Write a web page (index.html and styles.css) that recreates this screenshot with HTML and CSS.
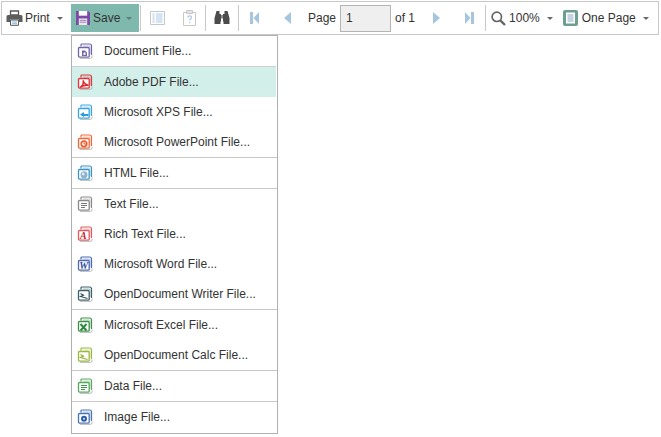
FILE: index.html
```html
<!DOCTYPE html>
<html lang="en">
<head>
<meta charset="utf-8">
<title>Report viewer</title>
<link rel="stylesheet" href="styles.css">
</head>
<body>
<svg class="defs" width="0" height="0" aria-hidden="true">
  <defs>
    <symbol id="sheets" viewBox="0 0 16 16">
      <path d="M4 3.500V2a1 1 0 0 1 1-1h7.500a2 2 0 0 1 2 2v9" fill="none" stroke="currentColor" stroke-width="1.200"/>
      <path d="M6 3h6a1 1 0 0 1 1 1v7" fill="none" stroke="currentColor" stroke-width=".8" opacity=".55"/>
      <path d="M2.500 4.500h8.500a1.200 1.200 0 0 1 1.200 1.200v7.600a.8.8 0 0 1-.8.8H2.500a1 1 0 0 1-1-1V5.500a1 1 0 0 1 1-1z" fill="#fff" stroke="currentColor" stroke-width="1.300"/>
      <path d="M15 12.500v1.200a1.600 1.600 0 0 1-1.600 1.600H3" fill="none" stroke="#b4b4b4" stroke-width="1"/>
    </symbol>
  </defs>
</svg>
<div class="toolbar">
  <div class="tool tool-print">
    <svg class="icon" width="17" height="16" viewBox="0 0 17 16"><path d="M4.500 1h8v4h-8z" fill="#fff" stroke="#555" stroke-width="1.300"/><path d="M2 5h13a1.500 1.500 0 0 1 1.500 1.500V12H13V9.500H4V12H.5V6.500A1.500 1.500 0 0 1 2 5z" fill="#5c5c5c"/><path d="M4.500 10h8v5.300h-8z" fill="#fff" stroke="#555"/><path d="M6 12h5M6 13.700h5" stroke="#8ab4d8"/></svg>
    <span class="label">Print</span><i class="caret"></i>
  </div>
  <div class="tool tool-save">
    <svg class="icon" width="14" height="14" viewBox="0 0 15 15"><path d="M0 0h13l2 2v13H0z" fill="#7b4aa6"/><path d="M3 0h9v5H3z" fill="#fff"/><path d="M3 8h9v7H3z" fill="#e8e8e8"/><path d="M4 10h7M4 12h7" stroke="#7b4aa6" stroke-width=".7"/></svg>
    <span class="label label-save">Save</span><i class="caret caret-save"></i>
  </div>
  <i class="sep sep-a"></i>
  <svg class="icon icon-doc" width="15" height="14" viewBox="0 0 15 14"><path d="M.5.500h14v13H.5z" fill="#fff" stroke="#c4c8cc"/><path d="M2.500 3h2M2.500 5h2M2.500 7h2M2.500 9h2M2.500 11h2" stroke="#a8c4e4"/><path d="M6 3h6.500M6 5h6.500M6 7h6.500M6 9h6.500M6 11h6.500" stroke="#a9c7ea"/></svg>
  <svg class="icon icon-clip" width="13" height="16" viewBox="0 0 13 16"><path d="M.5 2.500h12v13H.5z" fill="#fff" stroke="#c8c8c8"/><path d="M3.500.500h6v3h-6z" fill="#e4e4e4" stroke="#c8c8c8"/><path d="M4.800 7.500c0-2.300 3.700-2.300 3.700 0 0 1.500-1.800 1.400-1.800 3M6.700 12v1.300" fill="none" stroke="#a9c7ea" stroke-width="1.200"/></svg>
  <i class="sep sep-b"></i>
  <svg class="icon icon-find" width="16" height="14" viewBox="0 0 16 14"><path d="M2.500 0h3v3H7v7.500H6.500v2.500H.5V7zM13.500 0h-3v3H9v7.500h.5v2.500h6V7z" fill="#4c4c4c"/><path d="M7 4h2v3.500H7z" fill="#8a8a8a"/></svg>
  <i class="sep sep-c"></i>
  <svg class="icon icon-first" width="9" height="12" viewBox="0 0 9 12"><path d="M0 0h3v12H0zM9 0v12L3.500 6z" fill="#a6c5df"/></svg>
  <svg class="icon icon-prev" width="7" height="12" viewBox="0 0 7 12"><path d="M7 0v12L0 6z" fill="#a6c5df"/></svg>
  <span class="label label-page">Page</span>
  <div class="pagebox">1</div>
  <span class="label label-of">of 1</span>
  <svg class="icon icon-next" width="7" height="12" viewBox="0 0 7 12"><path d="M0 0v12l7-6z" fill="#a6c5df"/></svg>
  <svg class="icon icon-last" width="9" height="12" viewBox="0 0 9 12"><path d="M9 0H6v12h3zM0 0v12l5.500-6z" fill="#a6c5df"/></svg>
  <i class="sep sep-d"></i>
  <svg class="icon icon-zoom" width="15" height="15" viewBox="0 0 15 15"><circle cx="5.800" cy="5.800" r="4.700" fill="#fff" stroke="#666" stroke-width="1.700"/><path d="M9.300 9.300l4.700 4.700" stroke="#666" stroke-width="2.400"/></svg>
  <span class="label label-zoom">100%</span><i class="caret"></i>
  <svg class="icon icon-page" width="15" height="16" viewBox="0 0 15 16"><rect width="15" height="16" rx="2" fill="#6d9f91"/><path d="M3 2.500h9v11H3z" fill="#fff"/><path d="M4.500 5h6M4.500 7h6M4.500 9h6M4.500 11h6" stroke="#8aa7c4"/></svg>
  <span class="label label-fit">One Page</span><i class="caret"></i>
</div>

<ul class="menu">
  <li class="row"><svg class="fi c-doc" viewBox="0 0 16 16"><use href="#sheets"/><path d="M5 7.500h3l2 2v3.500H5z" fill="#6f66a8"/><path d="M6.500 9.500h2V12h-2z" fill="#fff"/></svg>Document File...</li>
  <li class="row row-on"><svg class="fi c-pdf" viewBox="0 0 16 16"><use href="#sheets"/><path d="M2.800 13.400c3-1 4-4.500 3.300-7 1 2.800 2.700 4.300 5.400 4.900-3-.2-6 .3-8.700 2.100z" fill="none" stroke="#e0252a" stroke-width="1.500"/></svg>Adobe PDF File...</li>
  <li class="row"><svg class="fi c-xps" viewBox="0 0 16 16"><use href="#sheets"/><path d="M3 10.500l4-2.500v2h4.500v2H7v1.200z" fill="#2b9be0"/></svg>Microsoft XPS File...</li>
  <li class="row row-last"><svg class="fi c-ppt" viewBox="0 0 16 16"><use href="#sheets"/><circle cx="7" cy="9.800" r="2.800" fill="none" stroke="#ec5a2c" stroke-width="1.600"/><path d="M7 8v2h2" fill="none" stroke="#ec5a2c"/></svg>Microsoft PowerPoint File...</li>
  <li class="row row-last"><svg class="fi c-html" viewBox="0 0 16 16"><use href="#sheets"/><circle cx="7" cy="9.800" r="3.500" fill="#8db3cf"/><circle cx="6.200" cy="9" r="1.400" fill="#dfeaf2"/></svg>HTML File...</li>
  <li class="row"><svg class="fi c-txt" viewBox="0 0 16 16"><use href="#sheets"/><path d="M4 7.500h6M4 9.500h6M4 11.500h4" stroke="#777"/></svg>Text File...</li>
  <li class="row"><svg class="fi c-rtf" viewBox="0 0 16 16"><use href="#sheets"/><text class="fi-letter" x="3" y="13" fill="#c8202c">A</text></svg>Rich Text File...</li>
  <li class="row"><svg class="fi c-word" viewBox="0 0 16 16"><use href="#sheets"/><text class="fi-letter" x="2.200" y="13" fill="#2c4a9c">W</text></svg>Microsoft Word File...</li>
  <li class="row row-last"><svg class="fi c-odw" viewBox="0 0 16 16"><use href="#sheets"/><path d="M3.500 7.500l3 1.700-3 1.300 7 2" fill="none" stroke="#2f4f57" stroke-width="1.100"/></svg>OpenDocument Writer File...</li>
  <li class="row"><svg class="fi c-xls" viewBox="0 0 16 16"><use href="#sheets"/><path d="M3.500 7l6 6.500M9.500 7l-6 6.500" stroke="#2e8b3a" stroke-width="2"/></svg>Microsoft Excel File...</li>
  <li class="row row-last"><svg class="fi c-odc" viewBox="0 0 16 16"><use href="#sheets"/><path d="M3.500 7.500l3 1.700-3 1.300 7 2" fill="none" stroke="#8fae2c" stroke-width="1.100"/></svg>OpenDocument Calc File...</li>
  <li class="row row-last"><svg class="fi c-data" viewBox="0 0 16 16"><use href="#sheets"/><path d="M4 7.500h6M4 9.500h6M4 11.500h4" stroke="#3f9a4a"/></svg>Data File...</li>
  <li class="row"><svg class="fi c-img" viewBox="0 0 16 16"><use href="#sheets"/><circle cx="7" cy="9.800" r="3" fill="#2f5ea8"/><circle cx="7" cy="9.800" r="1" fill="#dbe6f5"/></svg>Image File...</li>
</ul>
</body>
</html>
```

FILE: styles.css
```css
* { box-sizing: border-box; }
html, body { margin: 0; padding: 0; }
body {
  position: relative;
  height: 437px;
  background: #fff;
  color: #333;
  font: 12px "Liberation Sans", Arial, sans-serif;
  overflow: hidden;
}
.defs { position: absolute; }
.toolbar {
  display: flex;
  align-items: center;
  height: 34px;
  width: 658px;
  margin: 1px 0 0 1px;
  padding-left: 4px;
  border: 1px solid #c8c8c8;
  white-space: nowrap;
}
.icon { display: block; flex: none; }
.tool { display: flex; align-items: center; height: 28px; }
.tool-print { width: 65px; }
.tool-save {
  width: 68px;
  padding-left: 5px;
  background: #7fb9ae;
}
.label { display: block; margin-left: 2px; }
.label-save { margin-left: 3px; }
.caret {
  display: block;
  flex: none;
  width: 0;
  height: 0;
  margin: 1px 0 0 7px;
  border-style: solid;
  border-width: 3px 3px 0;
  border-color: #666 transparent transparent;
}
.caret-save { margin-left: 6px; border-top-color: #5f7f79; }
.sep { display: block; flex: none; width: 1px; height: 26px; background: #c8c8c8; }
.sep-a { margin-left: 1px; }
.icon-doc { margin-left: 9px; }
.icon-clip { margin-left: 18px; }
.sep-b { margin-left: 9px; }
.icon-find { margin-left: 8px; }
.sep-c { margin-left: 8px; }
.icon-first { margin-left: 11px; }
.icon-prev { margin-left: 25px; }
.label-page { margin-left: 17px; }
.pagebox {
  flex: none;
  width: 51px;
  height: 27px;
  margin-left: 4px;
  padding-left: 5px;
  border: 1px solid #b4b4b4;
  background: #efefef;
  line-height: 25px;
}
.label-of { margin-left: 4px; }
.icon-next { margin-left: 18px; }
.icon-last { margin-left: 25px; }
.sep-d { margin-left: 11px; }
.icon-zoom { margin-left: 5px; }
.label-zoom { margin-left: 3px; }
.icon-page { margin-left: 10px; }
.label-fit { margin-left: 4px; }

.menu {
  position: absolute;
  left: 71px;
  top: 35px;
  width: 207px;
  height: 399px;
  margin: 0;
  padding: 0;
  list-style: none;
  background: #fff;
  border: 1px solid #b0b0b0;
}
.row {
  display: flex;
  align-items: center;
  height: 30px;
  padding-left: 5px;
}
.row-on { background: #d3efea; border-top: 1px solid #d0d0d0; height: 31px; width: 204px; }
.row-last { height: 31px; border-bottom: 1px solid #c8c8c8; }
.fi { display: block; flex: none; width: 16px; height: 16px; margin-right: 11px; }
.fi-letter {
  font: italic bold 10px "Liberation Serif", serif;
}
.c-doc { color: #6f66a8; }
.c-pdf { color: #e0353a; }
.c-xps { color: #3aa5e8; }
.c-ppt { color: #ee6a3c; }
.c-html { color: #3d93c4; }
.c-txt { color: #8a8a8a; }
.c-rtf { color: #e05a60; }
.c-word { color: #4a68b4; }
.c-odw { color: #3c6068; }
.c-xls { color: #3e8f48; }
.c-odc { color: #9ab83c; }
.c-data { color: #56a85e; }
.c-img { color: #4a74b4; }
```
